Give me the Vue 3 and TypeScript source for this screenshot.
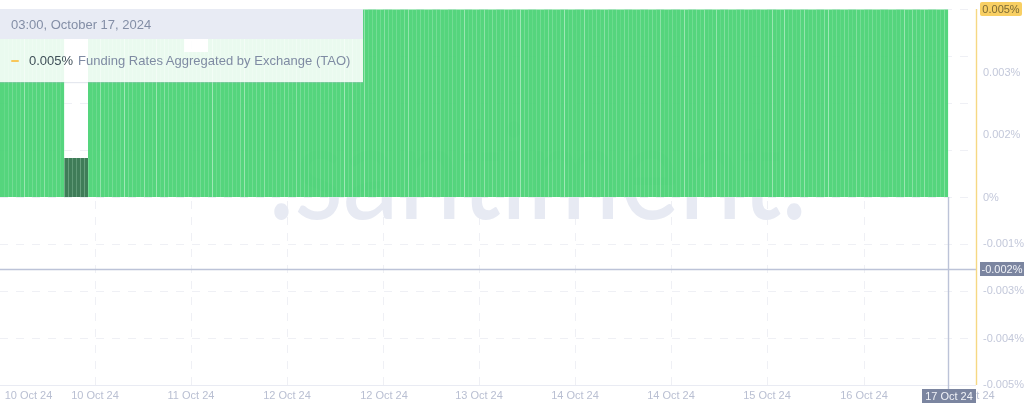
<script setup lang="ts">
const plotRight = 948
const barTop = 9.5
const zero = 197
const pitch = 4

interface Bar { x: number; y: number; h: number; dark: boolean }
const bars: Bar[] = []
for (let x = 1; x < plotRight; x += pitch) {
  if (x >= 65 && x < 89) bars.push({ x, y: 158, h: zero - 158, dark: true })
  else if (x >= 185 && x < 209) bars.push({ x, y: 52, h: zero - 52, dark: false })
  else bars.push({ x, y: barTop, h: zero - barTop, dark: false })
}
const stripes = bars.map((b, i) => ({
  x: b.x + pitch - 1,
  y: b.y,
  h: b.h,
  o: 0.14 + (((i * 37) % 11) / 11) * (i % 5 === 0 || i % 7 === 3 ? 0.55 : 0.18)
}))

const hGrid = [9.5, 56.5, 103.5, 150.5, 197.5, 244.5, 291.5, 338.5]
const vGrid = [95.5, 191.5, 287.5, 383.5, 479.5, 575.5, 671.5, 767.5, 864.5]

const yLabels = [
  { t: '0.003%', y: 72 },
  { t: '0.002%', y: 134 },
  { t: '0%', y: 197 },
  { t: '-0.001%', y: 243 },
  { t: '-0.003%', y: 290 },
  { t: '-0.004%', y: 338 },
  { t: '-0.005%', y: 384 }
]
const xLabels = [
  { t: '10 Oct 24', x: 28.5 },
  { t: '10 Oct 24', x: 95 },
  { t: '11 Oct 24', x: 191 },
  { t: '12 Oct 24', x: 287 },
  { t: '12 Oct 24', x: 384 },
  { t: '13 Oct 24', x: 479 },
  { t: '14 Oct 24', x: 575 },
  { t: '14 Oct 24', x: 671 },
  { t: '15 Oct 24', x: 767 },
  { t: '16 Oct 24', x: 864 },
  { t: 't 24', x: 985.5 }
]
</script>

<template>
  <div class="chart">
    <svg class="layer" width="1024" height="407" viewBox="0 0 1024 407">
      <g class="grid">
        <line v-for="y in hGrid" :key="'h' + y" x1="0" x2="975" :y1="y" :y2="y" />
        <line v-for="x in vGrid" :key="'v' + x" :x1="x" :x2="x" y1="9" y2="385" />
      </g>
      <line class="axis" x1="0" x2="976" y1="385.5" y2="385.5" />
    </svg>

    <div class="watermark">.santiment.</div>

    <svg class="layer" width="1024" height="407" viewBox="0 0 1024 407">
      <g class="bars">
        <rect
          v-for="b in bars"
          :key="b.x"
          :class="b.dark ? 'bar-dark' : 'bar'"
          :x="b.x - 1"
          :y="b.y"
          :width="pitch"
          :height="b.h"
        />
      </g>
      <rect
        v-for="s in stripes"
        :key="'s' + s.x"
        class="stripe"
        :x="s.x"
        :y="s.y"
        width="1"
        :height="s.h"
        :opacity="s.o"
      />
      <line class="cross" x1="948.5" x2="948.5" y1="197" y2="390" />
      <line class="cross" x1="0" x2="976" y1="269.5" y2="269.5" />
      <line class="yellow" x1="976.5" x2="976.5" y1="9" y2="385" />
    </svg>

    <span
      v-for="l in yLabels"
      :key="l.t"
      class="y-label"
      :style="{ top: l.y + 'px' }"
    >{{ l.t }}</span>
    <span
      v-for="(l, i) in xLabels"
      :key="i"
      class="x-label"
      :style="{ left: l.x + 'px' }"
    >{{ l.t }}</span>

    <span class="badge badge-last">0.005%</span>
    <span class="badge badge-cross">-0.002%</span>
    <span class="badge badge-date">17 Oct 24</span>

    <div class="tooltip">
      <div class="tooltip-head">03:00, October 17, 2024</div>
      <div class="tooltip-row">
        <i class="dash"></i>
        <span class="value">0.005%</span>
        <span class="name">Funding Rates Aggregated by Exchange (TAO)</span>
      </div>
    </div>
  </div>
</template>

<style scoped>
.chart {
  position: relative;
  width: 1024px;
  height: 407px;
  overflow: hidden;
  background: #fff;
  font-family: "Liberation Sans", Arial, sans-serif;
  filter: blur(0.35px);
}
.layer {
  position: absolute;
  left: 0;
  top: 0;
  display: block;
}
.grid line {
  stroke: #eff0f5;
  stroke-width: 1;
  stroke-dasharray: 8 8;
}
.axis {
  stroke: #e9ebf3;
  stroke-width: 1;
}
.bar {
  fill: #47d172;
  opacity: 0.92;
}
.bar-dark {
  fill: #3f7c58;
}
.stripe {
  fill: #c8f2d6;
}
.cross {
  stroke: #bcc3d8;
  stroke-width: 1.4;
}
.yellow {
  stroke: #f6d883;
  stroke-width: 1.4;
}
.watermark {
  position: absolute;
  left: 268px;
  top: 93px;
  font-family: "Lato", sans-serif;
  font-size: 134px;
  line-height: 150px;
  letter-spacing: -1px;
  color: #e7eaf3;
  white-space: nowrap;
  transform: scaleX(0.85);
  transform-origin: left center;
}
.y-label {
  position: absolute;
  left: 983px;
  transform: translateY(-50%);
  font-size: 11px;
  line-height: 13px;
  color: #c3c8da;
  white-space: nowrap;
}
.x-label {
  position: absolute;
  top: 389px;
  transform: translateX(-50%);
  font-size: 11px;
  line-height: 13px;
  color: #b9bfd2;
  white-space: nowrap;
}
.badge {
  position: absolute;
  font-size: 11px;
  line-height: 14px;
  white-space: nowrap;
  text-align: center;
}
.badge-last {
  left: 980px;
  top: 2px;
  width: 42px;
  height: 14px;
  border-radius: 2px;
  background: #f8cf63;
  color: #7c6a35;
}
.badge-cross {
  left: 980px;
  top: 262px;
  width: 44px;
  height: 14px;
  background: #7b85a0;
  color: #f1f3f8;
}
.badge-date {
  left: 922px;
  top: 389px;
  width: 54px;
  height: 14px;
  background: #7b85a0;
  color: #f1f3f8;
}
.tooltip {
  position: absolute;
  left: 0;
  top: 9px;
  width: 363px;
  height: 73px;
  display: flex;
  flex-direction: column;
  box-shadow: 0 1px 1px rgba(180, 190, 210, 0.35);
}
.tooltip-head {
  height: 30px;
  padding-left: 11px;
  display: flex;
  align-items: center;
  background: #e8ebf4;
  color: #838ea6;
  font-size: 13px;
}
.tooltip-row {
  flex: 1;
  display: flex;
  align-items: center;
  padding-left: 11px;
  background: rgba(255, 255, 255, 0.88);
  font-size: 13px;
}
.dash {
  width: 8px;
  height: 2px;
  margin-right: 10px;
  border-radius: 1px;
  background: #f8c75a;
}
.value {
  color: #3f4f58;
  margin-right: 5px;
}
.name {
  color: #7f8ba3;
  letter-spacing: 0.02px;
}
</style>
